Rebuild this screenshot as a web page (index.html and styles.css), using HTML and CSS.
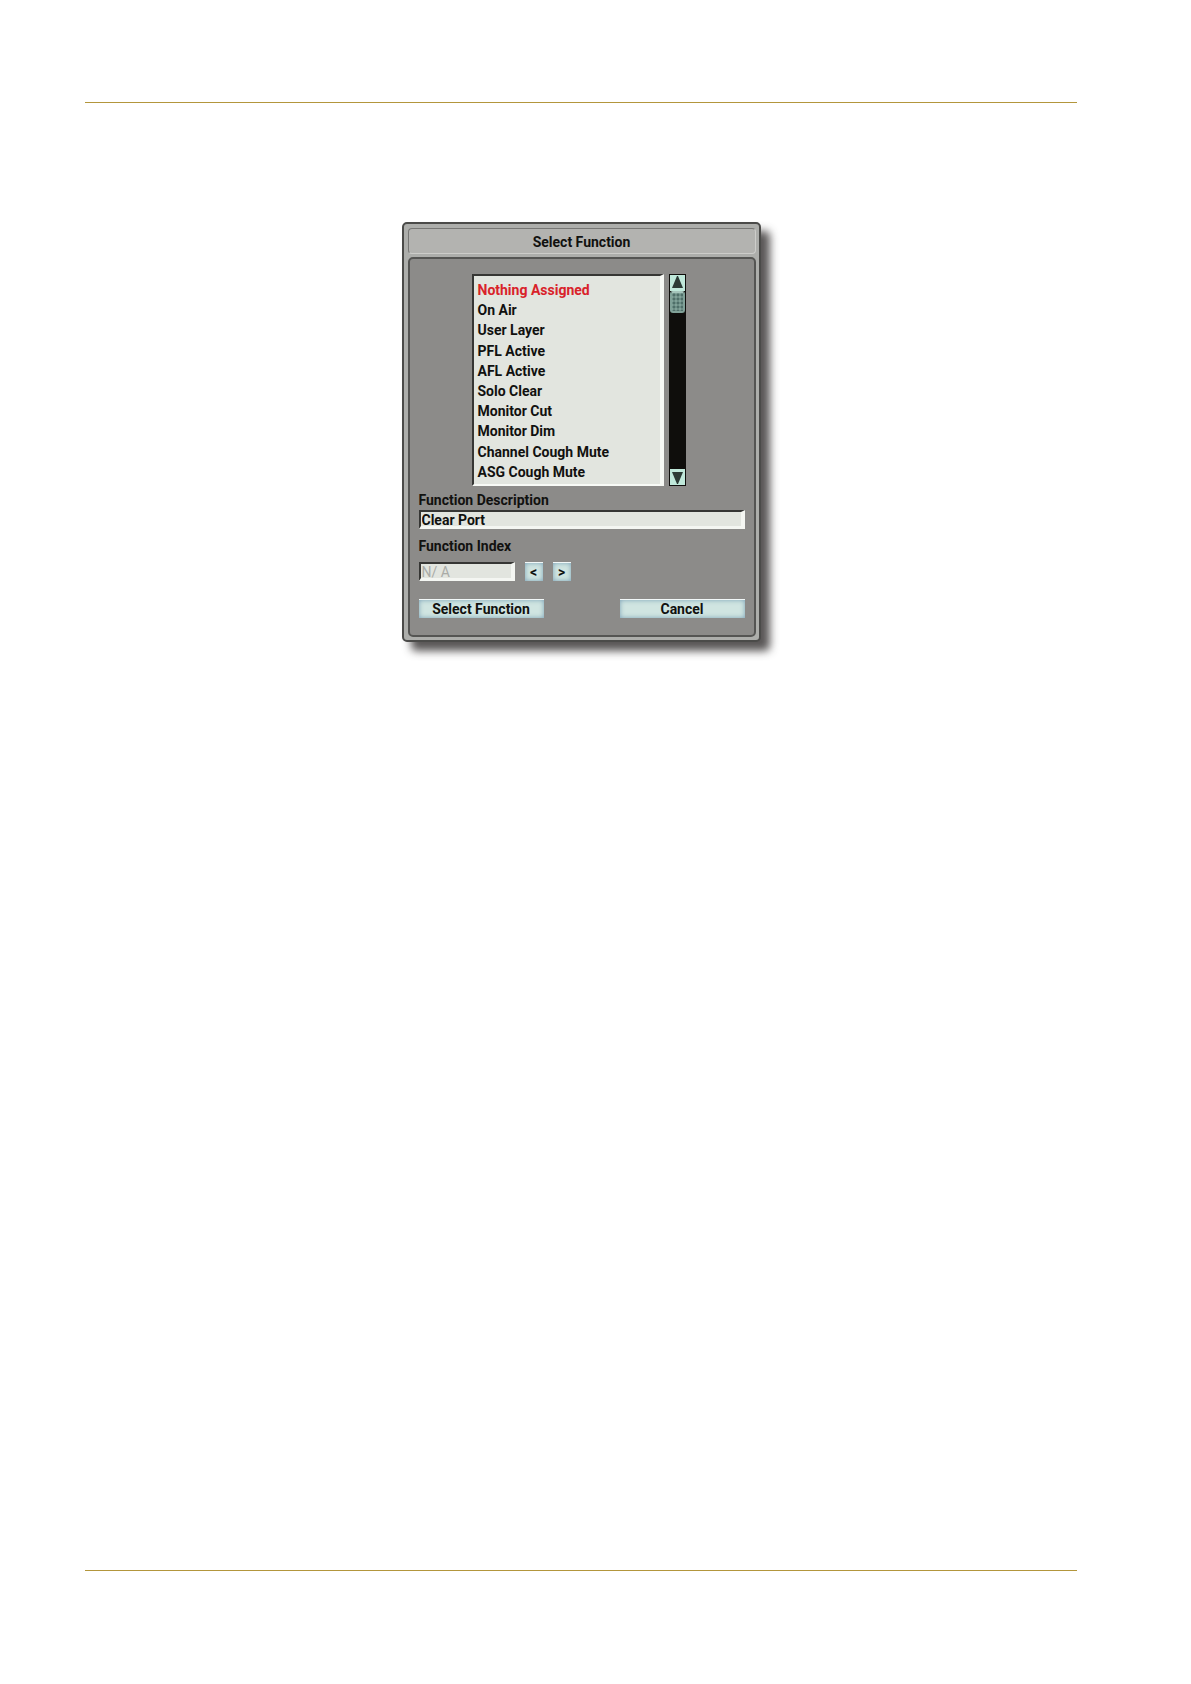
FILE: index.html
```html
<!DOCTYPE html>
<html lang="en">
<head>
    <meta charset="UTF-8">
    <meta name="viewport" content="width=device-width, initial-scale=1.0">
    <title>Select Function</title>
    <link rel="stylesheet" href="styles.css">
</head>
<body>

<header class="page-header"></header>

<main>
    <form class="dialog">
        <h1 class="title">Select Function</h1>
        <div class="panel">
            <div class="picker">
                <ul class="functions">
                    <li class="selected">Nothing Assigned</li>
                    <li>On Air</li>
                    <li>User Layer</li>
                    <li>PFL Active</li>
                    <li>AFL Active</li>
                    <li>Solo Clear</li>
                    <li>Monitor Cut</li>
                    <li>Monitor Dim</li>
                    <li>Channel Cough Mute</li>
                    <li>ASG Cough Mute</li>
                </ul>
                <div class="scrollbar">
                    <button type="button" class="arrow" aria-label="Scroll up">
                        <svg width="15" height="16" viewBox="0 0 15 16"><path d="M7 1h1l5 12H2z" fill="#2b3a35"/></svg>
                    </button>
                    <div class="track">
                        <div class="thumb"></div>
                    </div>
                    <button type="button" class="arrow" aria-label="Scroll down">
                        <svg width="15" height="16" viewBox="0 0 15 16"><path d="M2 3h11L8 15H7z" fill="#2b3a35"/></svg>
                    </button>
                </div>
            </div>

            <label for="description">Function Description</label>
            <input type="text" id="description" class="field" value="Clear Port">

            <label for="index" class="index-label">Function Index</label>
            <div class="index-row">
                <input type="text" id="index" class="field" value="N/ A" disabled>
                <button type="button" class="btn step">&lt;</button>
                <button type="button" class="btn step">&gt;</button>
            </div>

            <div class="actions">
                <button type="button" class="btn">Select Function</button>
                <button type="button" class="btn">Cancel</button>
            </div>
        </div>
    </form>
</main>

<footer class="page-footer"></footer>

</body>
</html>
```
FILE: styles.css
```css
* {
    box-sizing: border-box;
}
body {
    margin: 0;
    padding: 0 114px 0 85px;
    min-height: 100vh;
    display: flex;
    flex-direction: column;
    background: white;
    color: #11110f;
    font-family: Roboto, "Liberation Sans", sans-serif;
    font-size: 14px;
    font-weight: 700;
    line-height: 20px;
}
.page-header {
    height: 103px;
    border-bottom: 1px solid #b3963c;
}
.page-footer {
    height: 114px;
    border-top: 1px solid #b3963c;
}
main {
    flex: 1;
    padding: 119px 0;
}
.dialog {
    width: 359px;
    max-width: 100%;
    margin: 0 auto;
    padding: 4px 3px 3px 4px;
    border: 2px solid #4b4b49;
    border-radius: 5px;
    background: #adaeab;
    box-shadow: 9px 9px 8px rgba(60, 56, 56, 0.85);
}
.title {
    margin: 0 0 3px;
    height: 26px;
    font-size: 14px;
    line-height: 26px;
    text-align: center;
    background: #b3b3b0;
    border: 1px solid #777775;
    border-right-color: #cdcdca;
    border-bottom-color: #cdcdca;
    border-radius: 4px;
}
.panel {
    padding: 15px 9px 17px 9px;
    border: 2px solid #555553;
    border-radius: 5px;
    background: #8c8b89;
}
.picker {
    display: flex;
    justify-content: center;
    gap: 5px;
    height: 212px;
    margin-bottom: 4px;
    padding-right: 6px;
}
.functions {
    display: grid;
    grid-auto-rows: 1fr;
    align-items: center;
    width: 192px;
    margin: 0;
    padding: 4px 0 2px 4px;
    list-style: none;
    background: #e2e5df;
    border: 2px solid #363634;
    border-right: 4px solid #f8faf6;
    border-bottom: 2px solid #f8faf6;
}
.selected {
    color: #d9222a;
}
.scrollbar {
    display: flex;
    flex-direction: column;
    width: 17px;
    padding: 1px;
    background: #0f0e0c;
}
.arrow {
    height: 16px;
    padding: 0;
    border: 0;
    background: #bfe8da;
}
.arrow svg {
    display: block;
}
.track {
    flex: 1;
}
.thumb {
    height: 22px;
    border: 2px solid #80a198;
    border-top-color: #a5c4bb;
    border-radius: 3px;
    background: radial-gradient(circle, #4f6f69 1px, #80a198 2px) 0 0 / 4px 4px;
}
label {
    display: block;
}
.field {
    display: block;
    width: 100%;
    height: 19px;
    padding: 2px 1px 0;
    font: inherit;
    line-height: 14px;
    color: #11110f;
    background: #e2e5df;
    border: 2px solid #363634;
    border-right: 4px solid #f4f6f2;
    border-bottom: 3px solid #f4f6f2;
    border-radius: 0;
}
.field:disabled {
    width: 96px;
    color: #a9aba7;
    font-weight: 400;
}
.index-label {
    margin: 7px 0 6px;
}
.index-row {
    display: flex;
    gap: 10px;
}
.btn {
    width: 125px;
    height: 19px;
    padding: 0;
    font: inherit;
    line-height: 18px;
    color: #11110f;
    background: #d0e5e1;
    border: 0;
    border-top: 1px solid #f2f8f8;
    box-shadow: inset 0 0 5px #7ba1b6;
}
.step {
    width: 18px;
}
.actions {
    display: flex;
    justify-content: space-between;
    margin-top: 18px;
}
```
